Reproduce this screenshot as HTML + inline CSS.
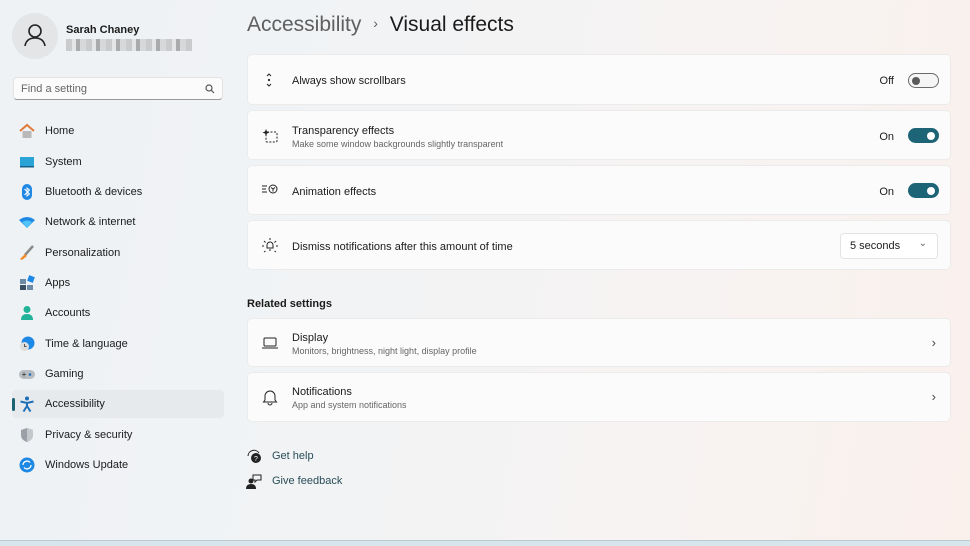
<!DOCTYPE html>
<html><head><meta charset="utf-8"><style>
*{box-sizing:border-box;margin:0;padding:0}
body{width:970px;height:546px;overflow:hidden;font-family:"Liberation Sans",sans-serif;color:#1b1b1b;position:relative;
background:linear-gradient(100deg,#eef2f5 0%,#f1f3f5 35%,#f7f3f2 70%,#faf0ec 100%);}
.bottom{position:absolute;left:0;right:0;top:540px;height:6px;background:#d6e6ec;border-top:1px solid #b9c9cf}
.abs{position:absolute}
.avatar{left:12px;top:13px;width:46px;height:46px;border-radius:50%;background:#e3e5e7}
.name{left:66px;top:24px;font-size:11px;font-weight:bold}
.blur{left:66px;top:39px;width:126px;height:12px;background:repeating-linear-gradient(90deg,#c9cbcd 0 6px,#e4e5e6 6px 10px,#a9abad 10px 14px,#d7d8d9 14px 20px)}
.search{left:13px;top:77px;width:210px;height:23px;background:#fbfbfb;border:1px solid #e3e3e3;border-bottom:1px solid #9a9a9a;border-radius:4px;font-size:11px;color:#666;padding:5px 7px}
.nav{left:12px;width:212px;height:28px;font-size:11px;display:flex;align-items:center;padding-left:33px;border-radius:4px}
.nav i{position:absolute;left:7px;top:6px;width:16px;height:16px}
.sel{background:#e6eaed}
.sel:before{content:"";position:absolute;left:0;top:8px;width:3px;height:13px;border-radius:2px;background:#1d6476}
h1{position:absolute;left:247px;top:13px;font-size:21px;font-weight:normal;color:#5f5f5f;white-space:nowrap}
h1 b{color:#1b1b1b;font-weight:normal}
.card{position:absolute;left:247px;width:704px;background:#fbfbfb;border:1px solid #ebebeb;border-radius:5px}
.t{position:absolute;left:44px;font-size:11px}
.s{position:absolute;left:44px;font-size:9px;color:#666}
.ic{position:absolute;left:13px}
.tl{position:absolute;right:56px;font-size:11px}
.tog{position:absolute;right:11px;width:31px;height:15px;border-radius:8px}
.on{background:#1d6476}.on:after{content:"";position:absolute;right:4px;top:3.5px;width:8px;height:8px;border-radius:50%;background:#fff}
.off{border:1px solid #6a6a6a;background:#f5f5f5}.off:after{content:"";position:absolute;left:3px;top:2.5px;width:8px;height:8px;border-radius:50%;background:#5a5a5a}
.chev{position:absolute;right:14px;font-size:13px;color:#444}
.link{position:absolute;left:272px;font-size:11px;color:#2a4d57}
</style></head><body>
<div class="abs avatar"><svg width="46" height="46" viewBox="0 0 46 46" fill="none" stroke="#222" stroke-width="1.6"><circle cx="23" cy="18" r="6"/><path d="M13 33c1-6 5-8 10-8s9 2 10 8"/></svg></div>
<div class="abs name">Sarah Chaney</div>
<div class="abs blur"></div>
<div class="abs search">Find a setting<svg style="position:absolute;right:7px;top:6px" width="10" height="10" viewBox="0 0 10 10" fill="none" stroke="#555" stroke-width="1.2"><circle cx="4" cy="4" r="3"/><path d="M6.3 6.3 9 9"/></svg></div>

<div class="abs nav" style="top:117px"><i><svg width="16" height="16"><path d="M1 8 8 2l7 6" fill="none" stroke="#e07b3a" stroke-width="2"/><rect x="3.5" y="8" width="9" height="7" fill="#b9b9b9"/></svg></i>Home</div>
<div class="abs nav" style="top:148px"><i><svg width="16" height="16"><rect x="1" y="3" width="14" height="9" fill="#2aa3d6"/><rect x="1" y="12" width="14" height="1.5" fill="#1a5f86"/></svg></i>System</div>
<div class="abs nav" style="top:178px"><i><svg width="16" height="16"><rect x="3" y="0" width="10" height="16" rx="5" fill="#1e88e5"/><path d="M5.5 5l5 5-2.5 2V4l2.5 2-5 5" fill="none" stroke="#fff" stroke-width="1"/></svg></i>Bluetooth &amp; devices</div>
<div class="abs nav" style="top:208px"><i><svg width="16" height="16"><path d="M0 6Q8 0 16 6L8 14Z" fill="#1e88e5"/><path d="M3 8Q8 5 13 8L8 14Z" fill="#4fc3f7"/></svg></i>Network &amp; internet</div>
<div class="abs nav" style="top:239px"><i><svg width="16" height="16"><path d="M14 1 6 10" stroke="#888" stroke-width="2.5"/><path d="M6 9l2 2-5 4-2-1z" fill="#f08a2a"/></svg></i>Personalization</div>
<div class="abs nav" style="top:269px"><i><svg width="16" height="16"><rect x="1" y="4" width="6" height="5" fill="#6d8ba5"/><rect x="1" y="10" width="6" height="5" fill="#3b4f63"/><rect x="8" y="10" width="6" height="5" fill="#6d8ba5"/><rect x="9" y="1" width="6" height="6" fill="#1e88e5" transform="rotate(20 12 4)"/></svg></i>Apps</div>
<div class="abs nav" style="top:299px"><i><svg width="16" height="16"><circle cx="8" cy="4.5" r="3.5" fill="#21b39a"/><path d="M2 15q0-6 6-6t6 6z" fill="#21b39a"/></svg></i>Accounts</div>
<div class="abs nav" style="top:330px"><i><svg width="16" height="16"><circle cx="9" cy="7" r="6.5" fill="#1e88e5"/><circle cx="5.5" cy="10.5" r="4.5" fill="#ddd"/><path d="M5.5 8v2.5h2" stroke="#555" fill="none"/></svg></i>Time &amp; language</div>
<div class="abs nav" style="top:360px"><i><svg width="16" height="16"><rect x="0" y="4" width="16" height="9" rx="4.5" fill="#b8bdc2"/><circle cx="11" cy="8.5" r="1.3" fill="#1e6fb8"/><path d="M3 8.5h4M5 6.5v4" stroke="#555"/></svg></i>Gaming</div>
<div class="abs nav sel" style="top:390px"><i><svg width="16" height="16"><circle cx="8" cy="2.5" r="2" fill="#1e6fb8"/><path d="M1.5 5.5l6.5 1.5 6.5-1.5M8 7v3l-3.5 5.5M8 10l3.5 5.5" fill="none" stroke="#1e6fb8" stroke-width="2"/></svg></i>Accessibility</div>
<div class="abs nav" style="top:421px"><i><svg width="16" height="16"><path d="M8 1l6 2v5c0 4-3 6-6 7-3-1-6-3-6-7V3z" fill="#9aa0a6"/><path d="M8 1l6 2v5c0 4-3 6-6 7z" fill="#c4c8cc"/></svg></i>Privacy &amp; security</div>
<div class="abs nav" style="top:451px"><i><svg width="16" height="16"><circle cx="8" cy="8" r="7.5" fill="#1e88e5"/><path d="M4 8a4 4 0 0 1 7-2.5M12 8a4 4 0 0 1-7 2.5" fill="none" stroke="#fff" stroke-width="1.3"/></svg></i>Windows Update</div>

<h1>Accessibility <span style="font-size:14px;margin:0 6px;position:relative;top:-3px">›</span> <b>Visual effects</b></h1>

<div class="card" style="top:54px;height:51px">
<svg class="ic" style="top:17px" width="16" height="16" viewBox="0 0 16 16" fill="none" stroke="#222"><path d="M6 4l2-2 2 2M6 12l2 2 2-2"/><circle cx="8" cy="8" r=".6" fill="#222"/></svg>
<div class="t" style="top:20px">Always show scrollbars</div>
<div class="tl" style="top:20px">Off</div><div class="tog off" style="top:18px"></div></div>

<div class="card" style="top:110px;height:50px">
<svg class="ic" style="top:17px" width="18" height="16" viewBox="0 0 18 16" fill="none" stroke="#222" stroke-dasharray="2 1.5"><rect x="5" y="4" width="11" height="10" rx="1"/><path d="M5 1l1 2.5 2.5 1-2.5 1L5 8 4 5.5 1.5 4.5 4 3.5z" fill="#222" stroke="none"/></svg>
<div class="t" style="top:14px">Transparency effects</div><div class="s" style="top:28px">Make some window backgrounds slightly transparent</div>
<div class="tl" style="top:20px">On</div><div class="tog on" style="top:17px"></div></div>

<div class="card" style="top:165px;height:50px">
<svg class="ic" style="top:17px" width="18" height="14" viewBox="0 0 18 14" fill="none" stroke="#222"><path d="M1 3h5M1 6h4M1 9h5"/><circle cx="12" cy="6" r="4"/><path d="M10 4.5l2 1.5 2-1.5M12 6v2.5"/></svg>
<div class="t" style="top:20px">Animation effects</div>
<div class="tl" style="top:20px">On</div><div class="tog on" style="top:17px"></div></div>

<div class="card" style="top:220px;height:50px">
<svg class="ic" style="top:16px" width="18" height="18" viewBox="0 0 18 18" fill="none" stroke="#222"><path d="M6 11V8a3 3 0 0 1 6 0v3H5.5h7M8 13h2M9 1v2M3 4l1.5 1.5M15 4l-1.5 1.5M1 9h2M15 9h2M3 15l1.5-1M15 15l-1.5-1"/></svg>
<div class="t" style="top:20px">Dismiss notifications after this amount of time</div>
<div style="position:absolute;right:12px;top:12px;width:98px;height:26px;background:#fff;border:1px solid #e3e3e3;border-radius:4px;font-size:11px;padding:6px 9px">5 seconds<span style="position:absolute;right:10px;top:4px;font-size:10px;color:#666">⌄</span></div></div>

<div class="abs" style="left:247px;top:298px;font-size:11px;font-weight:bold">Related settings</div>

<div class="card" style="top:318px;height:49px">
<svg class="ic" style="top:16px" width="18" height="16" viewBox="0 0 18 16" fill="none" stroke="#222"><rect x="3" y="3" width="12" height="8" rx="1"/><path d="M1 13h16"/></svg>
<div class="t" style="top:13px">Display</div><div class="s" style="top:27px">Monitors, brightness, night light, display profile</div>
<div class="chev" style="top:16px">›</div></div>

<div class="card" style="top:372px;height:50px">
<svg class="ic" style="top:15px" width="18" height="18" viewBox="0 0 18 18" fill="none" stroke="#222"><path d="M4 12V8a5 5 0 0 1 10 0v4l1.5 2h-13zM7 15a2 2 0 0 0 4 0"/></svg>
<div class="t" style="top:13px">Notifications</div><div class="s" style="top:27px">App and system notifications</div>
<div class="chev" style="top:16px">›</div></div>

<svg class="abs" style="left:246px;top:448px" width="16" height="16" viewBox="0 0 16 16"><path d="M2 8a6 6 0 0 1 11-3" fill="none" stroke="#222"/><circle cx="10" cy="10" r="5" fill="#222"/><text x="8" y="13" font-size="7" fill="#fff" font-family="Liberation Sans">?</text></svg>
<div class="link" style="top:450px">Get help</div>
<svg class="abs" style="left:246px;top:473px" width="16" height="16" viewBox="0 0 16 16"><circle cx="5" cy="8" r="2.5" fill="#222"/><path d="M0 16q0-5 5-5t5 5z" fill="#222"/><path d="M7 2h8v5h-4l-2 2V7H7z" fill="none" stroke="#222"/></svg>
<div class="link" style="top:475px">Give feedback</div>
<div class="bottom"></div>
</body></html>
